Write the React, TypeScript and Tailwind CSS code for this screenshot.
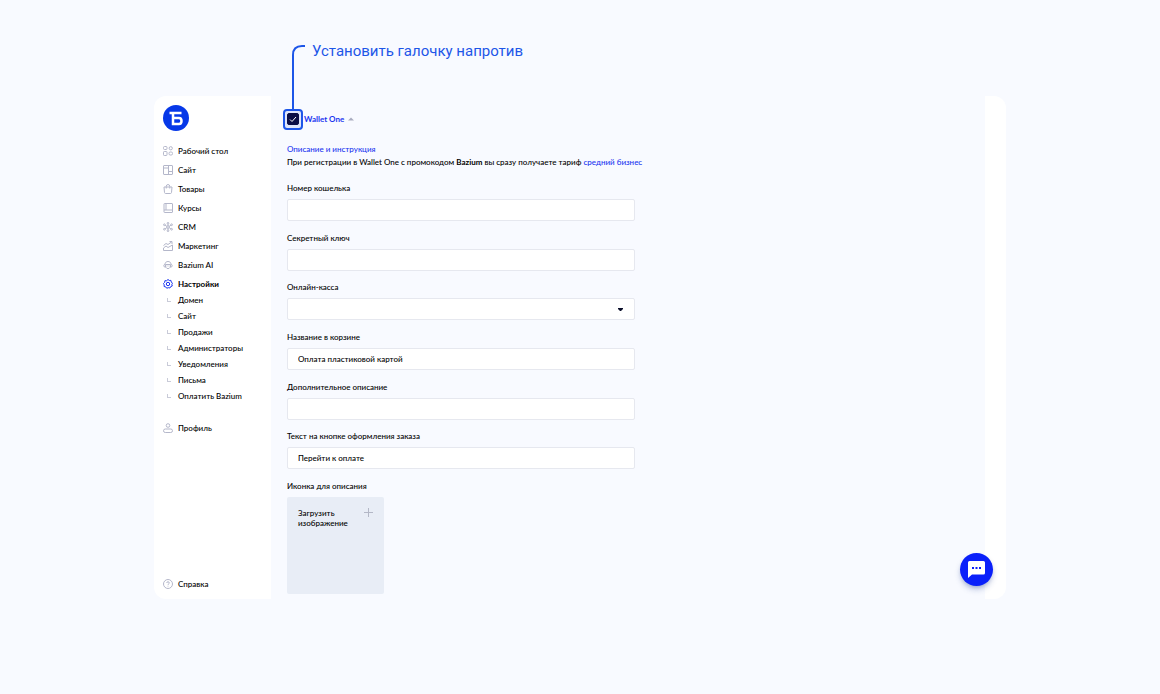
import React, { useState } from "react";

const iconProps = {
  viewBox: "0 0 20 20",
  fill: "none",
  stroke: "currentColor",
  strokeWidth: 2,
  className: "size-2.5 shrink-0",
  "aria-hidden": true,
} as const;

const DesktopIcon = () => (
  <svg {...iconProps}>
    <rect x="1" y="1" width="7" height="6" rx="2" />
    <circle cx="15.5" cy="4.5" r="3.2" />
    <rect x="1" y="11" width="7" height="8" rx="1.5" />
    <rect x="12" y="12" width="7" height="6" rx="2.5" />
  </svg>
);

const SiteIcon = () => (
  <svg {...iconProps}>
    <rect x="1" y="1" width="18" height="18" rx="1" />
    <path d="M11 1v18M1 6h10M11 13h8" />
  </svg>
);

const BagIcon = () => (
  <svg {...iconProps}>
    <path d="M2 6h16l-1 11q-.3 2-2.3 2H5.3Q3.3 19 3 17zM6.5 9V5q0-4 3.5-4t3.5 4v4" />
  </svg>
);

const CourseIcon = () => (
  <svg {...iconProps}>
    <rect x="2" y="1" width="17" height="18" rx="1" />
    <path d="M6 1v13M2 14h17" />
  </svg>
);

const CrmIcon = () => (
  <svg {...iconProps}>
    <circle cx="10" cy="10" r="2.5" />
    <circle cx="10" cy="2.5" r="1.7" />
    <circle cx="10" cy="17.5" r="1.7" />
    <circle cx="2.8" cy="5.5" r="1.7" />
    <circle cx="17.2" cy="5.5" r="1.7" />
    <circle cx="2.8" cy="14.5" r="1.7" />
    <circle cx="17.2" cy="14.5" r="1.7" />
    <path d="M10 4v4M10 12v4M4 6l4 3M12 9l4-3M4 14l4-3M12 11l4 3" />
  </svg>
);

const MarketingIcon = () => (
  <svg {...iconProps}>
    <path d="M1 9l5-4 4 2 7-5M13 1h5v5M1 19v-5l5-4 4 3 9-5v11z" />
  </svg>
);

const AiIcon = () => (
  <svg {...iconProps}>
    <path d="M5 14H4a2.5 2.5 0 0 1 0-5C4 5 6.5 3 10 3s6 2 6 6a2.5 2.5 0 0 1 0 5h-1M5 9h10v5l-3 3H8l-3-3zM8 11v2M12 11v2" />
  </svg>
);

const GearIcon = () => (
  <svg {...iconProps}>
    <path d="M10 1l2.6 2 3.3-.2.6 3.2L19 8.5 17.7 11l.8 3-3.1 1.2-1.6 2.8-3.3-.7-3 1.2-2-2.7L2.2 15l.2-3.3L1 9l2.3-2.3.5-3.3 3.3.1z" />
    <circle cx="10" cy="10" r="3.4" />
  </svg>
);

const ProfileIcon = () => (
  <svg {...iconProps}>
    <circle cx="10" cy="5" r="3.6" />
    <rect x="1" y="12" width="18" height="7" rx="3.5" />
  </svg>
);

const HelpIcon = () => (
  <svg {...iconProps}>
    <circle cx="10" cy="10" r="9" />
    <path d="M7.5 8q0-2.5 2.5-2.5T12.5 8q0 1.2-1.3 2T10 12M10 13.5V15" />
  </svg>
);

const menu = [
  { title: "Рабочий стол", Icon: DesktopIcon },
  { title: "Сайт", Icon: SiteIcon },
  { title: "Товары", Icon: BagIcon },
  { title: "Курсы", Icon: CourseIcon },
  { title: "CRM", Icon: CrmIcon },
  { title: "Маркетинг", Icon: MarketingIcon },
  { title: "Bazium AI", Icon: AiIcon },
  { title: "Настройки", Icon: GearIcon, active: true },
];

const settings = [
  "Домен",
  "Сайт",
  "Продажи",
  "Администраторы",
  "Уведомления",
  "Письма",
  "Оплатить Bazium",
];

type MenuLinkProps = {
  title: string;
  Icon: React.ComponentType;
  active?: boolean;
};

function MenuLink({ title, Icon, active }: MenuLinkProps) {
  return (
    <a href="#" className="flex h-4 items-center gap-[5px] whitespace-nowrap">
      <span className={active ? "text-[#1a35f0]" : "text-[#b4b7ca]"}>
        <Icon />
      </span>
      <span className={active ? "font-bold" : ""}>{title}</span>
    </a>
  );
}

function Sidebar() {
  return (
    <aside className="flex w-[117px] shrink-0 flex-col rounded-l-xl bg-white pt-[9px] pb-[7px] pl-[9px]">
      <a href="#" aria-label="Bazium" className="size-[26px]">
        <svg viewBox="0 0 52 52" className="size-full">
          <circle cx="26" cy="26" r="26" fill="#0638e8" />
          <path
            d="M13 16h24M20 16v22h12q5 0 5-6t-5-6H20"
            fill="none"
            stroke="#fff"
            strokeWidth="5"
          />
        </svg>
      </a>

      <nav className="mt-3 flex flex-1 flex-col">
        <div className="flex flex-col gap-[3px]">
          {menu.map((item) => (
            <MenuLink key={item.title} {...item} />
          ))}
        </div>

        {/* Подменю настроек */}
        <ul>
          {settings.map((title) => (
            <li key={title}>
              <a
                href="#"
                className="flex h-4 items-center gap-[7px] pl-1 whitespace-nowrap"
              >
                <span className="size-1 border-b border-l border-[#c9cbd8]" />
                {title}
              </a>
            </li>
          ))}
        </ul>

        <div className="mt-4 flex flex-1 flex-col justify-between">
          <MenuLink title="Профиль" Icon={ProfileIcon} />
          <MenuLink title="Справка" Icon={HelpIcon} />
        </div>
      </nav>
    </aside>
  );
}

type FieldProps = {
  id: string;
  label: string;
  children: React.ReactNode;
};

function Field({ id, label, children }: FieldProps) {
  return (
    <div className="flex flex-col gap-1.5">
      <label htmlFor={id} className="leading-[10px]">
        {label}
      </label>
      {children}
    </div>
  );
}

const control =
  "h-[22px] w-full rounded-xs border border-[#e6e8ef] bg-white px-2.5 outline-none focus:border-[#1a35f0]";

function TextField({
  id,
  label,
  value = "",
}: {
  id: string;
  label: string;
  value?: string;
}) {
  return (
    <Field id={id} label={label}>
      <input id={id} type="text" defaultValue={value} className={control} />
    </Field>
  );
}

function WalletToggle() {
  const [enabled, setEnabled] = useState(true);

  return (
    <div className="relative flex h-3 items-center">
      {/* Выноска с подсказкой */}
      <span className="absolute -top-1 -left-1 h-[21px] w-5 rounded-sm border-2 border-[#1d56e8] bg-[#dfe6fb]" />
      <svg
        viewBox="0 0 14 64"
        className="absolute bottom-4 left-[5px] h-16 w-3.5"
        fill="none"
        stroke="#1d56e8"
        strokeWidth="2"
        aria-hidden
      >
        <path d="M1 64V10Q1 1 10 1H13" />
      </svg>
      <p className="absolute bottom-16 left-[25px] font-['Roboto','Noto_Sans',sans-serif] text-[15px] leading-5 font-normal whitespace-nowrap text-[#1d56e8]">
        Установить галочку напротив
      </p>

      <input
        id="wallet-one"
        type="checkbox"
        checked={enabled}
        onChange={(e) => setEnabled(e.target.checked)}
        className="relative size-3 appearance-none rounded-xs border border-[#0a0e45] bg-white checked:bg-[#0a0e45]"
      />
      {enabled && (
        <svg
          viewBox="0 0 12 12"
          className="pointer-events-none absolute left-0 size-3"
          fill="none"
          stroke="#fff"
          aria-hidden
        >
          <path d="m3 6.5 2 2 4-4.5" />
        </svg>
      )}
      <label
        htmlFor="wallet-one"
        className="ml-[5px] font-bold text-[#1a35f0]"
      >
        Wallet One
      </label>
      <svg viewBox="0 0 6 4" className="ml-1 h-1 w-1.5" aria-hidden>
        <path d="M0 3.5 3 .5l3 3z" fill="#a9acc0" />
      </svg>
    </div>
  );
}

export default function App() {
  return (
    <div className="flex min-h-screen bg-[#f8faff] px-[154px] pt-24 pb-[95px] font-['Lato','Noto_Sans',sans-serif] text-[8px] font-medium text-black">
      <div className="relative flex min-w-0 flex-1">
        <Sidebar />

        <main className="flex min-w-0 flex-1 flex-col px-4 pt-[17px] pb-[5px]">
          <WalletToggle />

          <div className="mt-[18px] leading-[13px]">
            <a href="#" className="text-[#1a35f0]">
              Описание и инструкция
            </a>
            <p className="whitespace-nowrap">
              При регистрации в Wallet One с промокодом{" "}
              <b className="font-bold">Bazium</b> вы сразу получаете тариф{" "}
              <a href="#" className="text-[#1a35f0]">
                средний бизнес
              </a>
            </p>
          </div>

          <form className="mt-3.5 flex w-full max-w-[348px] flex-1 flex-col justify-between">
            <TextField id="wallet" label="Номер кошелька" />
            <TextField id="secret" label="Секретный ключ" />
            <Field id="cashbox" label="Онлайн-касса">
              <div className="relative flex items-center">
                <select id="cashbox" className={`${control} appearance-none`}>
                  <option value=""></option>
                </select>
                <svg
                  viewBox="0 0 5 3"
                  className="pointer-events-none absolute right-3 h-[3px] w-[5px]"
                  aria-hidden
                >
                  <path d="M0 0h5v1L3 3H2L0 1z" fill="#0a0e2a" />
                </svg>
              </div>
            </Field>
            <TextField
              id="title"
              label="Название в корзине"
              value="Оплата пластиковой картой"
            />
            <TextField id="description" label="Дополнительное описание" />
            <TextField
              id="button-text"
              label="Текст на кнопке оформления заказа"
              value="Перейти к оплате"
            />
            <Field id="upload" label="Иконка для описания">
              <button
                id="upload"
                type="button"
                className="flex size-[97px] items-start justify-between rounded-xs bg-[#e8edf6] p-[11px] text-left leading-[10px]"
              >
                <span>
                  Загрузить
                  <br />
                  изображение
                </span>
                <svg
                  viewBox="0 0 9 9"
                  className="size-[9px]"
                  stroke="#b3b7c6"
                  aria-hidden
                >
                  <path d="M4.5 0v9M0 4.5h9" />
                </svg>
              </button>
            </Field>
          </form>
        </main>

        <div className="w-[21px] shrink-0 rounded-r-xl bg-white" />

        {/* Чат поддержки */}
        <button
          type="button"
          aria-label="Чат"
          className="absolute right-[13px] bottom-[13px] flex size-[33px] items-center justify-center rounded-full bg-[#0a20fa] shadow-md shadow-blue-900/30"
        >
          <svg viewBox="0 0 17 17" className="size-[17px]" aria-hidden>
            <path
              d="M1.5 0h14Q17 0 17 1.5V12q0 1.5-1.5 1.5H4L0 17V1.5Q0 0 1.5 0"
              fill="#fff"
            />
            <path d="M4 6h2v2H4zM7.5 6h2v2h-2zM11 6h2v2h-2z" fill="#0a20fa" />
          </svg>
        </button>
      </div>
    </div>
  );
}
